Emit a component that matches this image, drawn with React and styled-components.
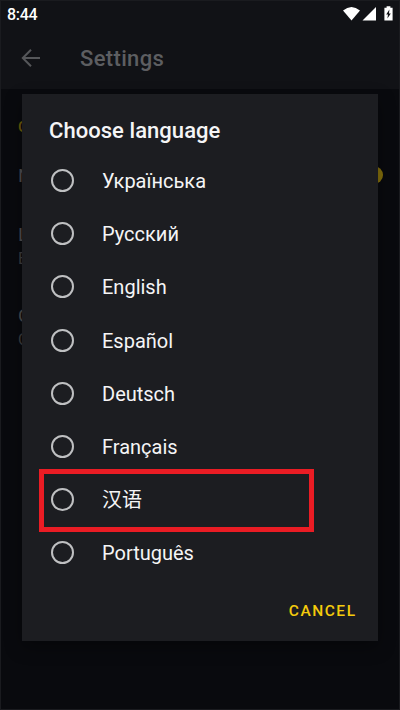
import React from "react";
import styled, { createGlobalStyle } from "styled-components";

const languages = [
  "Українська",
  "Русский",
  "English",
  "Español",
  "Deutsch",
  "Français",
  "汉语",
  "Português",
];

const App = () => {
  return (
    <Screen>
      <GlobalStyle />
      <StatusBar>
        <Clock>8:44</Clock>
        <StatusIcons />
      </StatusBar>
      <Toolbar>
        <BackIcon viewBox="0 0 20 20">
          <path d="M19 10H2.5M10 1.8L1.8 10L10 18.2" />
        </BackIcon>
        <ToolbarTitle>Settings</ToolbarTitle>
      </Toolbar>
      <Preferences>
        <SectionLabel>G</SectionLabel>
        <Preference $top={27}>
          <PreferenceTitle>N</PreferenceTitle>
          <Thumb />
        </Preference>
        <Preference $top={37}>
          <PreferenceTitle>L</PreferenceTitle>
          <Summary>E</Summary>
        </Preference>
        <Preference $top={34}>
          <PreferenceTitle>C</PreferenceTitle>
          <Summary>C</Summary>
        </Preference>
      </Preferences>
      <Dialog>
        <DialogTitle>Choose language</DialogTitle>
        <Options>
          {languages.map((language) => (
            <Option key={language}>
              <Radio />
              <span>{language}</span>
              {language === "汉语" && <Highlight />}
            </Option>
          ))}
        </Options>
        <Actions>
          <CancelButton>CANCEL</CancelButton>
        </Actions>
      </Dialog>
    </Screen>
  );
};

const StatusIcons = () => (
  <svg width="52" height="16" viewBox="0 0 52 16" fill="#fff">
    <path d="M0 4.4Q8.5-2.6 17 4.4L8.5 14.5Z" />
    <path d="M33 1V14.5H19.5Z" />
    <path d="M41.4 1.8h2.2V0.3h3.8V1.8h2.2V14.6H41.4Z" />
    <path d="M46.4 3.6L43.2 8.6H45L44.4 12.6L47.8 7.4H46Z" fill="#111216" />
  </svg>
);

const GlobalStyle = createGlobalStyle`
  * {
    box-sizing: border-box;
  }

  body {
    margin: 0;
    background: #090a0e;
    font-family: Roboto, "Noto Sans CJK SC", sans-serif;
  }
`;

const Screen = styled.div`
  position: relative;
  width: 400px;
  height: 710px;
  overflow: hidden;
  background: #090a0e;
  border: 1px solid #1a1b1f;
`;

const StatusBar = styled.div`
  display: flex;
  justify-content: space-between;
  height: 28px;
  padding: 5px 4px 0 6px;
  background: #111216;
`;

const Clock = styled.span`
  color: #fff;
  font-size: 16px;
  font-weight: 500;
  line-height: 18px;
  letter-spacing: -0.3px;
`;

const Toolbar = styled.div`
  display: flex;
  align-items: center;
  height: 60px;
  padding: 0 0 2px 20px;
  background: #111216;
`;

const BackIcon = styled.svg`
  width: 20px;
  height: 20px;
  fill: none;
  stroke: #56575a;
  stroke-width: 2;
`;

const ToolbarTitle = styled.span`
  margin-left: 39px;
  color: #5d5e61;
  font-size: 22px;
  font-weight: 500;
  letter-spacing: 0.35px;
`;

const Preferences = styled.div`
  padding: 27px 16px 0 17px;
`;

const SectionLabel = styled.div`
  color: #6b5a0a;
  font-size: 15px;
  font-weight: 500;
  line-height: 22px;
`;

const Preference = styled.div`
  position: relative;
  margin-top: ${(props) => props.$top}px;
`;

const PreferenceTitle = styled.div`
  color: #4c4d50;
  font-size: 19px;
  line-height: 22px;
`;

const Summary = styled.div`
  color: #3c3d40;
  font-size: 16px;
  line-height: 25px;
`;

const Thumb = styled.span`
  position: absolute;
  top: 1px;
  right: 0;
  width: 18px;
  height: 18px;
  border-radius: 50%;
  background: #846f0c;
`;

const Dialog = styled.div`
  position: absolute;
  top: 93px;
  left: 21px;
  width: 356px;
  height: 547px;
  padding-top: 23px;
  background: #1c1d21;
  box-shadow: 0 6px 16px rgba(0, 0, 0, 0.35);
  color: #f5f5f6;
`;

const DialogTitle = styled.div`
  padding-left: 27px;
  font-size: 22px;
  font-weight: 500;
  line-height: 28px;
  letter-spacing: 0.05px;
`;

const Options = styled.div`
  margin-top: 9px;
`;

const Option = styled.div`
  position: relative;
  display: flex;
  align-items: center;
  height: 53.2px;
  padding-left: 28.5px;
  font-size: 20px;
  line-height: 24px;

  span {
    margin: 1px 0 0 28.5px;
  }
`;

const Radio = styled.i`
  width: 23px;
  height: 23px;
  border: 2px solid #bfc0c2;
  border-radius: 50%;
`;

const Highlight = styled.div`
  position: absolute;
  top: -4px;
  left: 17px;
  width: 275px;
  height: 63px;
  border: 5px solid #ea1c24;
`;

const Actions = styled.div`
  display: flex;
  justify-content: flex-end;
  padding: 21px 21.5px 0 0;
`;

const CancelButton = styled.button`
  padding: 0;
  border: 0;
  background: none;
  color: #f5cb0c;
  font-family: inherit;
  font-size: 15.5px;
  font-weight: 500;
  line-height: 20px;
  letter-spacing: 1.5px;
`;

export default App;
